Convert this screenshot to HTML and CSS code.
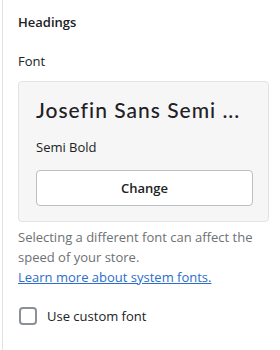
FILE: index.html
```html
<!DOCTYPE html>
<html lang="en">
<head>
  <meta charset="UTF-8" />
  <meta name="viewport" content="width=device-width, initial-scale=1.0" />
  <title>Headings font</title>
  <link rel="stylesheet" href="styles.css">
</head>
<body>
  <div class="panel">
    <h3 class="section-title">Headings</h3>

    <div class="field-label">Font</div>
    <div class="font-card">
      <div class="font-name">Josefin Sans Semi ...</div>
      <div class="font-style">Semi Bold</div>
      <button class="btn">Change</button>
    </div>

    <p class="help">
      Selecting a different font can affect the speed of your store.
      <a href="#">Learn more about system fonts.</a>
    </p>

    <label class="check">
      <input type="checkbox" />
      <span class="box"></span>
      Use custom font
    </label>
  </div>
</body>
</html>
```

FILE: styles.css
```css
body {
  margin: 0;
  background: #fff;
  font-family: "Open Sans", "Noto Sans", sans-serif;
  font-size: 13px;
  color: #202223;
}
.panel {
  margin-left: 2px;
  border-left: 1px solid #e1e3e5;
  padding: 12px 11px 40px 15px;
  min-height: 298px;
}
.section-title {
  margin: 0;
  font-size: 13px;
  font-weight: 600;
  line-height: 20px;
}
.field-label {
  margin-top: 19px;
  line-height: 20px;
}
.font-card {
  margin-top: 10px;
  background: #f6f6f7;
  border: 1px solid #e1e3e5;
  border-radius: 4px;
  padding: 14px 15px 15px 17px;
}
.font-name {
  font-family: "Lato", sans-serif;
  font-size: 21px;
  font-weight: 500;
  letter-spacing: 1px;
  line-height: 28px;
  color: #1f2124;
}
.font-style {
  margin-top: 13px;
  line-height: 20px;
}
.btn {
  display: block;
  width: 100%;
  margin-top: 13px;
  height: 36px;
  background: #fff;
  border: 1px solid #babfc3;
  border-radius: 4px;
  font-family: inherit;
  font-size: 13px;
  font-weight: 600;
  color: #202223;
}
.help {
  margin: 5px 0 0;
  line-height: 20px;
  color: #6d7175;
}
.help a {
  color: #2c6ecb;
  display: block;
}
.check {
  display: flex;
  align-items: center;
  gap: 10px;
  margin-top: 19px;
  line-height: 20px;
}
.check input {
  display: none;
}
.box {
  width: 14px;
  height: 14px;
  border: 2px solid #8c9196;
  border-radius: 4px;
  margin-left: 1px;
}
```
